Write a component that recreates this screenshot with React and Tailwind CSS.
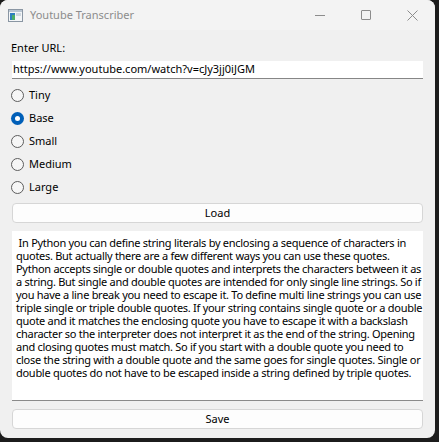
import { useState } from 'react';

const sizes = ['Tiny', 'Base', 'Small', 'Medium', 'Large'];

const transcript = [
  ' In Python you can define string literals by enclosing a sequence of characters in',
  'quotes. But actually there are a few different ways you can use these quotes.',
  'Python accepts single or double quotes and interprets the characters between it as',
  'a string. But single and double quotes are intended for only single line strings. So if',
  'you have a line break you need to escape it. To define multi line strings you can use',
  'triple single or triple double quotes. If your string contains single quote or a double',
  'quote and it matches the enclosing quote you have to escape it with a backslash',
  'character so the interpreter does not interpret it as the end of the string. Opening',
  'and closing quotes must match. So if you start with a double quote you need to',
  'close the string with a double quote and the same goes for single quotes. Single or',
  'double quotes do not have to be escaped inside a string defined by triple quotes.',
];

function AppIcon() {
  return (
    <svg width="15" height="13" viewBox="0 0 15 13">
      <rect x="0.5" y="0.5" width="14" height="12" fill="#f4f6f8" stroke="#8a96a3" />
      <rect x="1" y="1" width="13" height="2" fill="#b9c6d3" />
      <rect x="2" y="4" width="5" height="7" fill="#2f7fbf" />
      <rect x="4" y="6" width="3" height="5" fill="#4cae6a" />
      <rect x="8" y="4" width="5" height="3" fill="#cfd8e0" />
    </svg>
  );
}

function Radio({ checked }) {
  if (checked) {
    return (
      <span className="w-[13px] h-[13px] rounded-full bg-[#005fb8] flex items-center justify-center shrink-0">
        <span className="w-[5px] h-[5px] rounded-full bg-white" />
      </span>
    );
  }
  return <span className="w-[13px] h-[13px] rounded-full border border-[#5d5d5d] bg-[#f6f6f6] shrink-0" />;
}

export default function App() {
  const [size, setSize] = useState('Base');

  return (
    <div className="w-[439px] h-[442px] bg-[#1c1c1c] overflow-hidden" style={{ fontFamily: '"Noto Sans", "Open Sans", sans-serif' }}>
      <div className="w-[435px] h-[438px] rounded-lg overflow-hidden bg-[#f0f0f0] flex flex-col text-black text-[11px]">
        {/* title bar */}
        <div className="h-[30px] bg-[#f3f3f3] flex items-center shrink-0">
          <div className="ml-[8px] flex items-center"><AppIcon /></div>
          <span className="ml-[7px] text-[11px] text-[#8c8c8c]">Youtube Transcriber</span>
          <div className="ml-auto flex items-center h-full">
            <div className="w-[46px] h-full flex items-center justify-center">
              <span className="w-[10px] h-px bg-[#8c8c8c]" />
            </div>
            <div className="w-[46px] h-full flex items-center justify-center">
              <span className="w-[10px] h-[10px] border border-[#8c8c8c] rounded-[1px]" />
            </div>
            <div className="w-[46px] h-full flex items-center justify-center">
              <svg width="11" height="11" viewBox="0 0 11 11">
                <path d="M0.5 0.5 L10.5 10.5 M10.5 0.5 L0.5 10.5" stroke="#8c8c8c" strokeWidth="1" />
              </svg>
            </div>
          </div>
        </div>

        <div className="flex flex-col px-[12px]">
          <div className="mt-[10px] h-[16px] flex items-center -ml-px">Enter URL:</div>
          <div className="mt-[5px] h-[18px] bg-white border-b border-[#868686] flex items-center pl-px">
            https://www.youtube.com/watch?v=cJy3jj0iJGM
          </div>

          <div className="mt-[5px] flex flex-col -ml-px">
            {sizes.map(s => (
              <div key={s} className="h-[23px] flex items-center gap-[5px] cursor-default" onClick={() => setSize(s)}>
                <Radio checked={size === s} />
                <span>{s}</span>
              </div>
            ))}
          </div>

          <button className="mt-[4px] h-[20px] rounded-[4px] border border-[#d6d6d6] bg-[#fdfdfd] flex items-center justify-center">
            Load
          </button>

          <div className="mt-[8px] h-[170px] bg-white border-b border-[#8a8a8a] pl-[4px] pt-[5px] leading-[13px] whitespace-pre tracking-[-0.28px]">
            {transcript.map((l, i) => <div key={i}>{l}</div>)}
          </div>

          <button className="mt-[8px] h-[20px] rounded-[4px] border border-[#d6d6d6] bg-[#fdfdfd] flex items-center justify-center">
            Save
          </button>
        </div>
      </div>
    </div>
  );
}
